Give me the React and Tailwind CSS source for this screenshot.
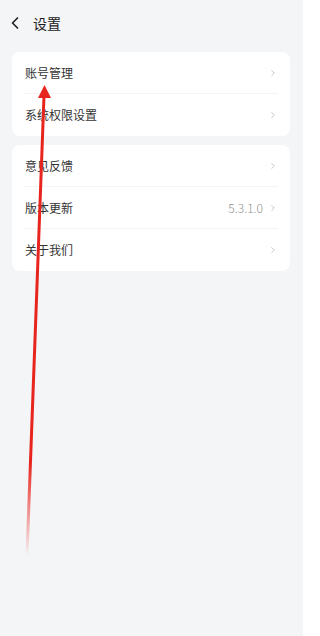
import { ChevronLeft, ChevronRight } from "lucide-react";

const groups = [
    [{ label: "账号管理" }, { label: "系统权限设置" }],
    [{ label: "意见反馈" }, { label: "版本更新", value: "5.3.1.0" }, { label: "关于我们" }],
];

function Row({ label, value, last }) {
    return (
        <div className="flex h-[42px] items-center pl-[13px] pr-[12px] relative">
            <span className="flex-1 text-[12px] text-[#333]">{label}</span>
            {value && <span className="text-[12px] font-light text-[#8f8f8f] mr-[5px]">{value}</span>}
            <ChevronRight className="w-[10px] h-[10px] text-[#bbb]" strokeWidth={2} />
            {!last && <div className="absolute left-[12px] right-[12px] bottom-0 h-px bg-[#f4f4f6]" />}
        </div>
    );
}

function Arrow() {
    return (
        <svg className="absolute inset-0 pointer-events-none" width="309" height="636" viewBox="0 0 309 636">
            <defs>
                <linearGradient id="fade" x1="0" y1="556" x2="0" y2="90" gradientUnits="userSpaceOnUse">
                    <stop offset="0" stopColor="#e8241e" stopOpacity="0" />
                    <stop offset="0.1" stopColor="#e8241e" stopOpacity="0.5" />
                    <stop offset="0.2" stopColor="#e8241e" stopOpacity="1" />
                    <stop offset="1" stopColor="#e8241e" stopOpacity="1" />
                </linearGradient>
            </defs>
            <line x1="27" y1="556" x2="44" y2="96" stroke="url(#fade)" strokeWidth="3" />
            <polygon points="44.5,85 38,98 51,98" fill="#e8241e" />
        </svg>
    );
}

export default function App() {
    return (
        <div className="relative flex w-[309px] h-[636px] bg-white overflow-hidden" style={{ fontFamily: '"Noto Sans CJK SC", "Noto Sans", sans-serif' }}>
            <div className="w-[303px] h-full bg-[#f4f5f7]">
                {/* header */}
                <div className="flex h-[46px] items-center pl-[5px]">
                    <ChevronLeft className="w-[20px] h-[20px] text-[#222]" strokeWidth={2} />
                    <span className="ml-[8px] text-[14px] text-[#1a1a1a]">设置</span>
                </div>

                <div className="flex flex-col gap-[9px] ml-[12px] w-[278px] mt-[6px]">
                    {groups.map((rows, i) => (
                        <div key={i} className="bg-white rounded-[8px]">
                            {rows.map((r, j) => (
                                <Row key={r.label} {...r} last={j === rows.length - 1} />
                            ))}
                        </div>
                    ))}
                </div>
            </div>
            <Arrow />
        </div>
    );
}
